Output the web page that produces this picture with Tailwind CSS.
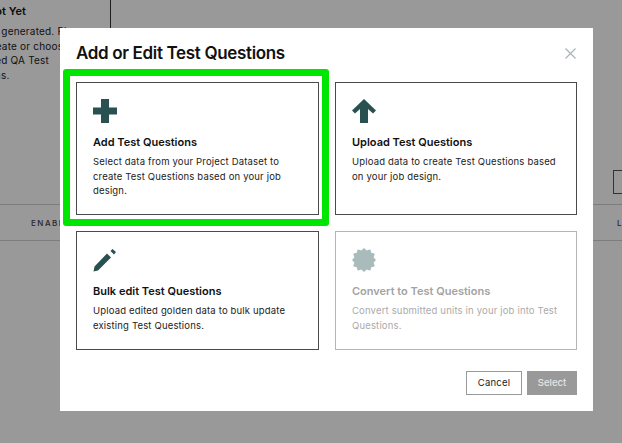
<!DOCTYPE html>
<html><head><meta charset="utf-8"><script src="https://cdn.jsdelivr.net/npm/@tailwindcss/browser@4"></script></head>
<body class="m-0 bg-white">
<div class="relative w-[622px] h-[443px] overflow-hidden bg-white font-['Inter','Liberation_Sans',sans-serif] text-[#222]">
  <div class="h-[204px]">
    <div class="ml-[-40px] w-[151px] h-[28px] border-r border-[#333]"></div>
  </div>
  <div class="flex items-center justify-between h-[37px] border-y border-[#d0d0d0] pl-[31px] pr-0 text-[8px] font-medium tracking-[1.5px] text-[#444]"><span>ENABLED</span><span class="mr-[-40px] w-[45px]">LABEL</span></div>

  <div class="absolute left-[-13px] top-[4px] w-[150px]">
    <p class="text-[11px] font-semibold leading-[14px] text-[#111]">Not Yet</p>
    <p class="mt-[6px] ml-[-1px] w-[240px] text-[10px] leading-[14.500px] tracking-[0.2px]">be generated. Please<br>create or choose<br>ated QA Test<br>ions.</p>
  </div>
  <div class="absolute left-[613px] top-[170px] w-[30px] h-[24px] border border-[#555] bg-white"></div>

  <div class="absolute inset-0 bg-black/40"></div>

  <div class="absolute left-[60px] top-[28px] w-[533px] h-[383px] bg-white px-[16px] pt-[15px]">
    <div class="flex items-center justify-between h-[20px]">
      <h1 class="text-[17px] font-semibold leading-[20px] tracking-[-0.34px] text-[#111]">Add or Edit Test Questions</h1>
      <svg class="mr-[1px] w-[11px] h-[11px]" viewBox="0 0 11 11" fill="none" stroke="#a6b4b4" stroke-width="1.2"><path d="M.5.5l10 10M10.5.5l-10 10"/></svg>
    </div>
    <div class="mt-[19px] grid grid-cols-[243px_242px] grid-rows-[133px_119px] gap-x-[16px] gap-y-[16px]">
      <div class="relative border border-[#4a4a4a] px-[16px] pt-[16px]">
        <div class="absolute left-[-14px] top-[-14px] w-[266px] h-[157px] border-[7px] border-[#00e600] rounded-[3px]"></div>
        <svg class="w-[24px] h-[24px] block" viewBox="0 0 24 24" fill="#2a5152"><path d="M8 0h8v8.500h8v7h-8V24H8v-8.500H0v-7h8z"/></svg>
        <h2 class="mt-[12px] text-[11px] leading-[15px] font-semibold text-[#111]">Add Test Questions</h2>
        <p class="mt-[5px] text-[9.5px] leading-[14.500px] tracking-[0.17px] text-[#222]">Select data from your Project Dataset to create Test Questions based on your job design.</p>
      </div>
      <div class="border border-[#4a4a4a] px-[16px] pt-[16px]">
        <svg class="w-[24px] h-[24px] block" viewBox="0 0 24 24" fill="#2a5152"><path d="M12 0l12 11.500-3 3-5-4.500V24H8V10l-5 4.500-3-3z"/></svg>
        <h2 class="mt-[12px] text-[11px] leading-[15px] font-semibold text-[#111]">Upload Test Questions</h2>
        <p class="mt-[5px] text-[9.5px] leading-[14.500px] tracking-[0.17px] text-[#222]">Upload data to create Test Questions based on your job design.</p>
      </div>
      <div class="border border-[#4a4a4a] px-[16px] pt-[16px]">
        <svg class="w-[24px] h-[24px] block" viewBox="0 0 24 24" fill="#2a5152"><path d="M0.500 23.500l1-5L14 5.500l4 4L5 22.500zM17.500 3l2-2 3.500 3-2 2.500z"/></svg>
        <h2 class="mt-[12px] text-[11px] leading-[15px] font-semibold text-[#111]">Bulk edit Test Questions</h2>
        <p class="mt-[5px] text-[9.5px] leading-[14.500px] tracking-[0.17px] text-[#222]">Upload edited golden data to bulk update existing Test Questions.</p>
      </div>
      <div class="border border-[#b5b5b5] px-[16px] pt-[16px]">
        <svg class="w-[24px] h-[24px] block" viewBox="0 0 24 24" fill="#a9bcbb"><path d="M12 0l2.800 2.600 3.500-1.400 1 3.600 3.600 1-1.300 3.400L24 12l-2.400 2.800 1.300 3.400-3.600 1-1 3.600-3.500-1.400L12 24l-2.800-2.600-3.500 1.400-1-3.600-3.600-1 1.300-3.400L0 12l2.400-2.800-1.300-3.400 3.600-1 1-3.600 3.500 1.400z"/></svg>
        <h2 class="mt-[12px] text-[11px] leading-[15px] font-semibold text-[#a3a3a3]">Convert to Test Questions</h2>
        <p class="mt-[5px] text-[9.5px] leading-[14.500px] tracking-[0.17px] text-[#aaa]">Convert submitted units in your job into Test Questions.</p>
      </div>
    </div>
    <div class="mt-[21px] flex justify-end gap-[5px]">
      <button class="w-[56px] h-[24px] border border-[#999] bg-white text-[9.500px] tracking-[0.2px] text-[#222]">Cancel</button>
      <button class="w-[50px] h-[24px] bg-[#999] text-[9.500px] font-medium text-[#e6e6e6]">Select</button>
    </div>
  </div>
</div>
</body></html>
